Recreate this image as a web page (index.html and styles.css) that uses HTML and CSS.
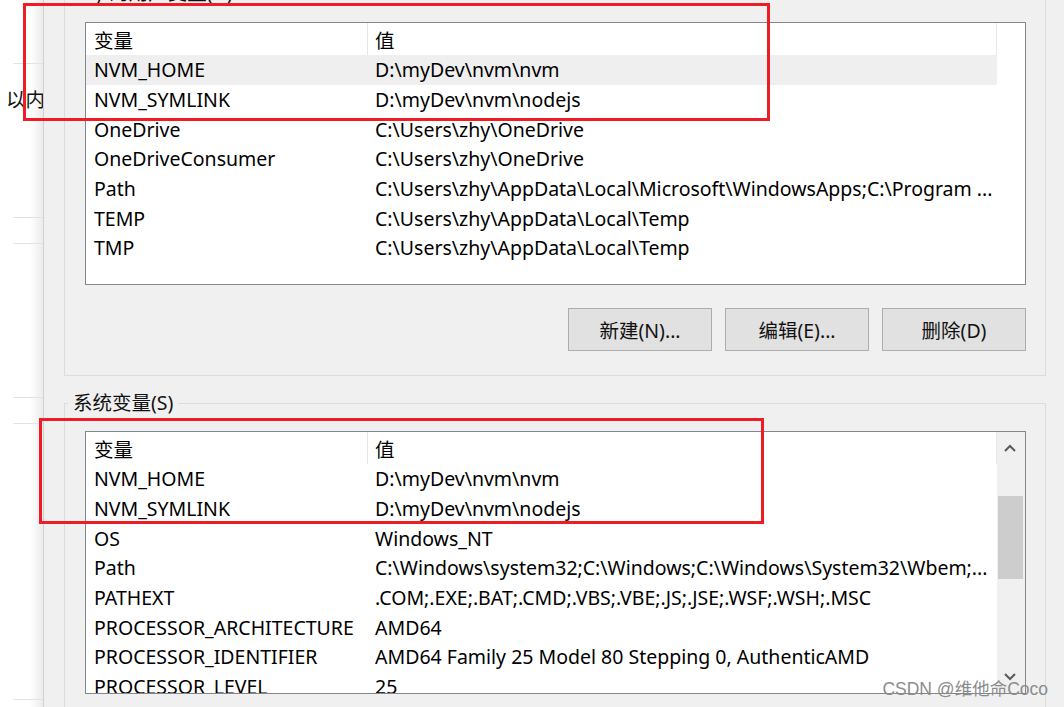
FILE: index.html
```html
<!DOCTYPE html>
<html lang="zh-CN">
<head>
<meta charset="utf-8">
<title>环境变量</title>
<link rel="stylesheet" href="styles.css">
</head>
<body>
<div class="screen">
  <aside class="side">
    <div class="side-cell s1"></div>
    <div class="side-cell s2"><span class="side-text">以内存</span></div>
    <div class="side-cell s3"></div>
    <div class="side-cell s2"></div>
    <div class="side-cell s3"></div>
    <div class="side-cell s4"></div>
  </aside>
  <main class="dialog">
    <fieldset class="group group-user">
      <legend>zhy 的用户变量(U)</legend>
      <div class="list">
        <div class="list-body">
          <div class="row head"><div class="c1">变量</div><div class="c2">值</div></div>
          <div class="row sel"><div class="c1">NVM_HOME</div><div class="c2">D:\myDev\nvm\nvm</div></div>
          <div class="row"><div class="c1">NVM_SYMLINK</div><div class="c2">D:\myDev\nvm\nodejs</div></div>
          <div class="row"><div class="c1">OneDrive</div><div class="c2">C:\Users\zhy\OneDrive</div></div>
          <div class="row"><div class="c1">OneDriveConsumer</div><div class="c2">C:\Users\zhy\OneDrive</div></div>
          <div class="row"><div class="c1">Path</div><div class="c2">C:\Users\zhy\AppData\Local\Microsoft\WindowsApps;C:\Program ...</div></div>
          <div class="row"><div class="c1">TEMP</div><div class="c2">C:\Users\zhy\AppData\Local\Temp</div></div>
          <div class="row"><div class="c1">TMP</div><div class="c2">C:\Users\zhy\AppData\Local\Temp</div></div>
        </div>
        <div class="gutter"></div>
      </div>
      <div class="buttons">
        <button class="btn">新建(N)...</button>
        <button class="btn">编辑(E)...</button>
        <button class="btn">删除(D)</button>
      </div>
    </fieldset>
    <fieldset class="group group-sys">
      <legend>系统变量(S)</legend>
      <div class="list">
        <div class="list-body">
          <div class="row head"><div class="c1">变量</div><div class="c2">值</div></div>
          <div class="row"><div class="c1">NVM_HOME</div><div class="c2">D:\myDev\nvm\nvm</div></div>
          <div class="row"><div class="c1">NVM_SYMLINK</div><div class="c2">D:\myDev\nvm\nodejs</div></div>
          <div class="row"><div class="c1">OS</div><div class="c2">Windows_NT</div></div>
          <div class="row"><div class="c1">Path</div><div class="c2">C:\Windows\system32;C:\Windows;C:\Windows\System32\Wbem;...</div></div>
          <div class="row"><div class="c1">PATHEXT</div><div class="c2">.COM;.EXE;.BAT;.CMD;.VBS;.VBE;.JS;.JSE;.WSF;.WSH;.MSC</div></div>
          <div class="row"><div class="c1">PROCESSOR_ARCHITECTURE</div><div class="c2">AMD64</div></div>
          <div class="row"><div class="c1">PROCESSOR_IDENTIFIER</div><div class="c2">AMD64 Family 25 Model 80 Stepping 0, AuthenticAMD</div></div>
          <div class="row"><div class="c1">PROCESSOR_LEVEL</div><div class="c2">25</div></div>
        </div>
        <div class="scrollbar">
          <div class="sb-btn"><svg width="12" height="8" viewBox="0 0 12 8"><polyline points="1,7 6,2 11,7" fill="none" stroke="#5a5a5a" stroke-width="2"/></svg></div>
          <div class="sb-track"><div class="sb-thumb"></div></div>
          <div class="sb-btn"><svg width="12" height="8" viewBox="0 0 12 8"><polyline points="1,1 6,6 11,1" fill="none" stroke="#5a5a5a" stroke-width="2"/></svg></div>
        </div>
      </div>
    </fieldset>
  </main>
  <div class="mark mark-user"></div>
  <div class="mark mark-sys"></div>
  <div class="watermark">CSDN @维他命Coco</div>
</div>
</body>
</html>
```
FILE: styles.css
```css
* { box-sizing: border-box; }
html, body { margin: 0; padding: 0; }
body {
  width: 1064px;
  height: 707px;
  overflow: hidden;
  background: #f0f0f0;
  font-family: "Noto Sans", "Noto Sans CJK SC", sans-serif;
  font-size: 19.5px;
  color: #000;
}
.screen { display: flex; height: 707px; position: relative; overflow: hidden; }

.side {
  width: 43px;
  flex: none;
  display: flex;
  flex-direction: column;
  background: linear-gradient(to right, #fff 0, #fff 30px, #ebebeb 43px);
  overflow: hidden;
}
.side-cell { margin-left: 13px; border-bottom: 1px solid #e2e2e2; flex: none; }
.s1 { height: 64px; }
.s2 { height: 154px; }
.s3 { height: 26px; }
.s4 { height: 276px; }
.side-text {
  display: block;
  margin-left: -7px;
  margin-top: 23px;
  line-height: 26px;
  white-space: nowrap;
  color: #111;
}

.dialog {
  flex: 1;
  min-width: 0;
  border-left: 1px solid #d0d0d0;
  background: #f0f0f0;
  padding: 0 18px 0 20px;
}

.group {
  margin: 0;
  min-width: 0;
  border: 1px solid #dcdcdc;
  padding: 16px 19px 24px 20px;
}
.group legend {
  font-size: 19.5px;
  line-height: 26px;
  padding: 0 5px;
  margin-left: -17px;
  color: #111;
}
.group-user { margin-top: -20px; }
.group-sys { margin-top: 14px; padding-top: 15px; }

.list {
  height: 263px;
  border: 1px solid #828790;
  background: #fff;
  display: flex;
  overflow: hidden;
}
.list-body { width: 911px; flex: none; }
.gutter { flex: 1; }

.row { display: flex; align-items: center; height: 29.67px; white-space: nowrap; }
.row.head { height: 32px; border-right: 1px solid #e8e8e8; }
.row.head .c1 { border-right: 1px solid #e5e5e5; height: 100%; display: flex; align-items: center; }
.row.sel { background: #efefef; }
.c1 { width: 282px; flex: none; padding-left: 8px; }
.c2 { flex: 1; min-width: 0; padding-left: 7px; overflow: hidden; }

.buttons { display: flex; justify-content: flex-end; gap: 13px; margin-top: 23px; }
.btn {
  width: 144px;
  height: 43px;
  background: #e1e1e1;
  border: 1px solid #adadad;
  font: inherit;
  color: #111;
  padding: 0;
}

.scrollbar { flex: 1; background: #f0f0f0; display: flex; flex-direction: column; }
.sb-btn { height: 32px; flex: none; display: flex; align-items: center; justify-content: center; padding-right: 2px; }
.sb-track { flex: 1; padding: 32px 2px 0 1px; }
.sb-thumb { height: 83px; background: #cdcdcd; }

.mark { position: absolute; border: 3px solid #ee1c25; }
.mark-user { left: 23px; top: 3px; width: 747px; height: 118px; }
.mark-sys { left: 39px; top: 418px; width: 725px; height: 106px; }

.watermark {
  position: absolute;
  right: 16px;
  bottom: 8px;
  font-size: 17.5px;
  line-height: 20px;
  color: #8c8c8c;
  font-family: "Liberation Sans", "Noto Sans CJK SC", sans-serif;
}
```
